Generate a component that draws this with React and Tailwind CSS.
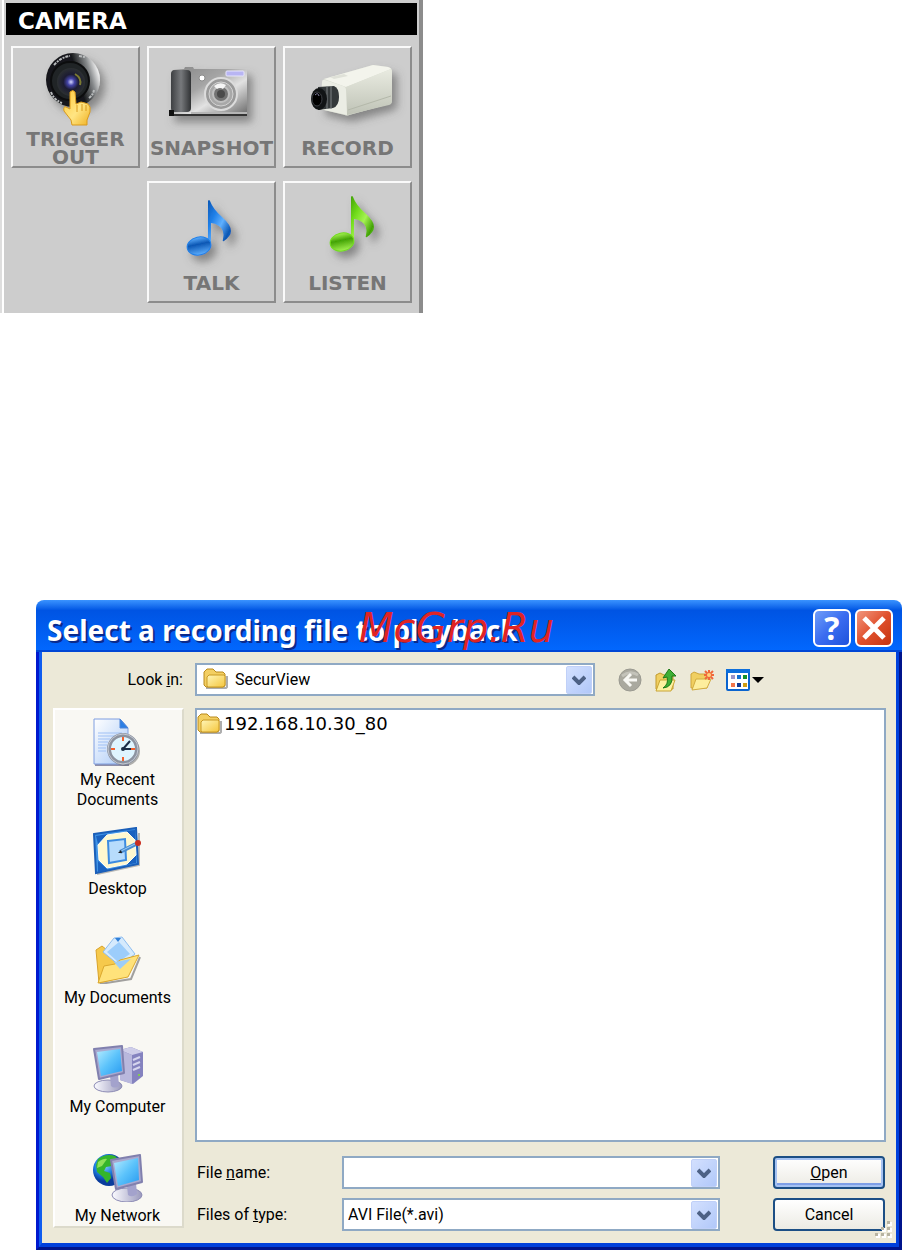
import { useState } from "react";

function TriggerIcon() {
  return (
    <svg viewBox="0 0 125 82" className="h-[82px] w-[125px]" aria-hidden="true">
      <defs>
        <linearGradient id="lensRing" x1="0" y1="0.3" x2="1" y2="0">
          <stop offset="0.5" stopColor="#17191b" />
          <stop offset="0.72" stopColor="#85888a" />
          <stop offset="0.88" stopColor="#f2f2f2" />
          <stop offset="1" stopColor="#8b8d8f" />
        </linearGradient>
        <radialGradient id="lensGlass">
          <stop offset="0" stopColor="#d4d6ff" />
          <stop offset="0.25" stopColor="#4444a8" />
          <stop offset="0.55" stopColor="#1c1c33" />
          <stop offset="1" stopColor="#2c3032" />
        </radialGradient>
        <linearGradient id="handFill" x1="0" y1="0" x2="1" y2="1">
          <stop offset="0" stopColor="#ffc93a" />
          <stop offset="0.55" stopColor="#ffe583" />
          <stop offset="1" stopColor="#f0b020" />
        </linearGradient>
        <filter id="softShadow" x="-30%" y="-30%" width="170%" height="170%">
          <feDropShadow dx="5" dy="6" stdDeviation="4" floodColor="#555" floodOpacity="0.6" />
        </filter>
      </defs>
      <g filter="url(#softShadow)">
        <circle cx="60" cy="32" r="27" fill="url(#lensRing)" />
      </g>
      <path d="M41 17q7-8 16-9M66 8l6 1M38 44q3 8 11 11M76 50q4-3 5-8" fill="none" stroke="#b9bcbd" strokeWidth="2" strokeDasharray="3 1 2 1" />
      <circle cx="57" cy="33" r="19" fill="#202426" stroke="#0c0d0e" strokeWidth="2" />
      <circle cx="58" cy="34" r="14" fill="url(#lensGlass)" />
      <path d="M62 26q7 4 5 11" fill="none" stroke="#7c7b32" strokeWidth="2" />
      <path
        d="M57 44q3-3 5 0l1 12 5-2 4 1 3 1q3 2 2 8l-3 8v5H59l-1-5-7-9q-1-5 2-4l4 2z"
        fill="url(#handFill)"
        stroke="#d99a1c"
        strokeWidth="1"
      />
      <path d="M64 57v7m5-8v7m4-6v6" stroke="#d99a1c" strokeWidth="1" />
    </svg>
  );
}

function SnapshotIcon() {
  return (
    <svg viewBox="0 0 125 82" className="h-[82px] w-[125px]" aria-hidden="true">
      <defs>
        <linearGradient id="camBody" x1="0" y1="0" x2="1" y2="1">
          <stop offset="0" stopColor="#858585" />
          <stop offset="0.4" stopColor="#a5a5a5" />
          <stop offset="0.62" stopColor="#e2e2e2" />
          <stop offset="1" stopColor="#666" />
        </linearGradient>
        <linearGradient id="camGrip">
          <stop offset="0" stopColor="#3d3f42" />
          <stop offset="0.5" stopColor="#77797c" />
          <stop offset="1" stopColor="#303234" />
        </linearGradient>
      </defs>
      <g filter="url(#softShadow)">
        <path d="M24 22l11-1 1-2h8l1 2h50q3 0 3 3v44H20v-5l2-2V26z" fill="url(#camBody)" />
      </g>
      <rect x="22" y="22" width="20" height="42" rx="4" fill="url(#camGrip)" />
      <path d="M42 64h56v2H42z" fill="#b5b5b5" />
      <path d="M20 66h78v2H20z" fill="#333" />
      <path d="M20 62h5v6h-5z" fill="#111" />
      <rect x="77" y="23" width="18" height="5" rx="1" fill="#b8b5f3" stroke="#e6e5fb" strokeWidth="1" />
      <circle cx="53" cy="30" r="3" fill="#fff" stroke="#8c8c8c" strokeWidth="1" />
      <circle cx="72" cy="46" r="16" fill="#9a9a9a" stroke="#dcdcdc" strokeWidth="2" />
      <circle cx="72" cy="46" r="12" fill="#a8a8a8" stroke="#d2d2d2" strokeWidth="1" />
      <circle cx="72" cy="46" r="8" fill="#737373" stroke="#bfbfbf" strokeWidth="2" />
      <circle cx="72" cy="46" r="4" fill="#4a4a4a" />
      <path d="M65 38q6-5 12-1l-3 4q-3-2-6 0z" fill="#f5f5f5" />
    </svg>
  );
}

function RecordIcon() {
  return (
    <svg viewBox="0 0 125 82" className="h-[82px] w-[125px]" aria-hidden="true">
      <defs>
        <linearGradient id="boxSide" x1="0" y1="0" x2="0" y2="1">
          <stop offset="0" stopColor="#e9ebe1" />
          <stop offset="1" stopColor="#bfc3b6" />
        </linearGradient>
      </defs>
      <g filter="url(#softShadow)">
        <path d="M39 31l49-14 15 2q4 1 4 4v29q0 3-3 4L64 67q-2 1-4 0l-25-6z" fill="#d8dbcf" />
      </g>
      <path d="M39 31l49-14 15 2q3 1 3 2L61 39z" fill="#f3f4ec" />
      <path d="M61 39l45-18q1 1 1 4v28q0 3-3 4L62 67z" fill="url(#boxSide)" />
      <path d="M63 62l43-14" stroke="#b4b8aa" strokeWidth="1" />
      <path d="M37 34q0-3 3-2l18 6q3 1 3 4l1 25-27-6z" fill="#ebede4" />
      <path d="M45 29l14-3 4 2-14 3z" fill="#dfe1d8" />
      <path d="M33 39l16-1q5 2 5 11t-6 11l-15 2z" fill="#34393a" />
      <path d="M42 38v23m4-23v23" stroke="#7c8283" strokeWidth="1" />
      <ellipse cx="34" cy="51" rx="8" ry="11" fill="#111415" />
      <ellipse cx="32" cy="51" rx="5" ry="7" fill="#000" stroke="#3c3f44" strokeWidth="1" />
      <path d="M30 47q3-3 4 1" fill="none" stroke="#8583a5" strokeWidth="1" />
    </svg>
  );
}

function NoteIcon({ id, light, main, dark, x = 0, y = 0 }) {
  return (
    <svg viewBox="0 0 125 82" className="h-[82px] w-[125px] overflow-visible" aria-hidden="true">
      <defs>
        <linearGradient id={`${id}Flag`} x1="0" y1="0" x2="1" y2="1">
          <stop offset="0" stopColor={dark} />
          <stop offset="0.3" stopColor={main} />
          <stop offset="0.55" stopColor={light} />
          <stop offset="0.8" stopColor={dark} />
          <stop offset="1" stopColor={main} />
        </linearGradient>
        <linearGradient id={`${id}Head`} x1="0" y1="0" x2="0" y2="1">
          <stop offset="0" stopColor={light} />
          <stop offset="0.4" stopColor={dark} />
          <stop offset="1" stopColor={light} />
        </linearGradient>
      </defs>
      <g filter="url(#softShadow)" transform={`translate(${x} ${y})`}>
        <path d="M59 18q1-2 2 0 3 8 12 16 9 8 9 14 0 5-7 10-2 1-1-2 2-9-4-13-4-3-8-3v23h-3z" fill={`url(#${id}Flag)`} />
        <ellipse cx="50" cy="63" rx="12" ry="9" transform="rotate(-12 50 63)" fill={`url(#${id}Head)`} stroke={main} />
      </g>
    </svg>
  );
}

const cameraButtons = [
  { label: "TRIGGER OUT", icon: <TriggerIcon /> },
  { label: "SNAPSHOT", icon: <SnapshotIcon /> },
  { label: "RECORD", icon: <RecordIcon /> },
  {
    label: "TALK",
    icon: <NoteIcon id="talk" light="#5fb0ff" main="#1e7fe8" dark="#0c57b4" />,
    className: "col-start-2",
  },
  {
    label: "LISTEN",
    icon: <NoteIcon id="listen" light="#a5f252" main="#72dc1c" dark="#43a305" x={7} y={-4} />,
  },
];

function CameraPanel() {
  return (
    <section className="w-[423px] max-w-full border-r-4 border-l-2 border-l-[#dedede] border-r-[#8c8c8c] bg-[#cdcdcd] pt-[3px] pr-[2px] pb-[10px] pl-1 shadow-[inset_2px_0_#fff]">
      <h2 className="h-8 bg-black pl-3 font-['DejaVu_Sans',sans-serif] text-[23px] leading-9 font-bold text-white">
        CAMERA
      </h2>
      <div className="mt-[11px] grid grid-cols-3 gap-x-[7px] gap-y-[13px] px-[5px]">
        {cameraButtons.map((b) => (
          <button
            key={b.label}
            type="button"
            className={`flex flex-col items-center border-2 border-t-[#fafafa] border-r-[#8c8c8c] border-b-[#8c8c8c] border-l-[#fafafa] ${b.className || ""}`}
          >
            {b.icon}
            <span className="flex h-9 items-center justify-center font-['DejaVu_Sans',sans-serif] text-[20px] leading-[18px] font-bold text-[#767676]">
              {b.label}
            </span>
          </button>
        ))}
      </div>
    </section>
  );
}

function FolderIcon() {
  return (
    <svg viewBox="0 0 25 22" className="h-[22px] w-[25px] shrink-0" aria-hidden="true">
      <defs>
        <linearGradient id="folderFront" x1="0" y1="0" x2="1" y2="1">
          <stop offset="0" stopColor="#fff6b8" />
          <stop offset="1" stopColor="#f5c63c" />
        </linearGradient>
      </defs>
      <path d="M3 20h20l1-1V8" fill="none" stroke="#777" strokeOpacity="0.6" strokeWidth="2" />
      <path d="M1 17V4l3-3h6l3 3h7l2 2v12l-2 1H3z" fill="#f3cf62" stroke="#b98a1c" />
      <path d="M4 18V9l2-2h15l1 1v9l-2 2H5z" fill="url(#folderFront)" stroke="#c99a25" />
    </svg>
  );
}

function BackIcon() {
  return (
    <svg viewBox="0 0 24 24" className="size-6" aria-hidden="true">
      <circle cx="12" cy="12" r="11" fill="#aaa99f" stroke="#9b9a91" />
      <path d="M4 8q8-6 16-1" stroke="#c4c3ba" strokeWidth="3" fill="none" />
      <path d="M13 6l-6 6 6 6M7 12h12" fill="none" stroke="#f8f8f4" strokeWidth="3" />
    </svg>
  );
}

function UpFolderIcon() {
  return (
    <svg viewBox="0 0 24 24" className="size-6" aria-hidden="true">
      <path d="M2 21V7l4-2 4 2h9v14z" fill="#f0cf61" stroke="#c19a2d" />
      <path d="M2 23l4-11h15l-4 11z" fill="#fdf0a0" stroke="#c9a434" />
      <path d="M9 20q6-4 4-11l-4 1 6-9 7 7-4 0q1 11-9 12z" fill="#3fae35" stroke="#1d7a17" />
    </svg>
  );
}

function NewFolderIcon() {
  return (
    <svg viewBox="0 0 24 24" className="size-6" aria-hidden="true">
      <path d="M1 20V6l3-2 5 2h8v14z" fill="#f0cf61" stroke="#cfa63a" />
      <path d="M2 22l4-11h15l-4 9z" fill="#fdee9d" stroke="#d2ac41" />
      <path d="M19 2v10M14 7h10M15 3l8 8M23 3l-8 8" stroke="#f0683a" strokeWidth="2" />
      <circle cx="19" cy="7" r="2" fill="#ffd27a" />
    </svg>
  );
}

function ViewsIcon() {
  return (
    <svg viewBox="0 0 38 24" className="h-6 w-[38px]" aria-hidden="true">
      <rect x="1" y="2" width="22" height="20" rx="1" fill="#fff" stroke="#0a64cf" strokeWidth="2" />
      <path d="M0 1h24v4H0z" fill="#0d6fdc" />
      <path d="M5 7h4v4H5z" fill="#9b94c8" />
      <path d="M11 7h4v4h-4z" fill="#1470d0" />
      <path d="M17 7h4v4h-4z" fill="#12912a" />
      <path d="M5 15h4v4H5z" fill="#f2764a" />
      <path d="M11 15h4v4h-4z" fill="#123a94" />
      <path d="M17 15h4v4h-4z" fill="#cf9c12" />
      <path d="M26 9h12l-6 6z" fill="#000" />
    </svg>
  );
}

function RecentIcon() {
  return (
    <svg viewBox="0 0 50 48" className="h-12 w-[50px]" aria-hidden="true">
      <defs>
        <linearGradient id="paper" x1="0" y1="0" x2="1" y2="1">
          <stop offset="0" stopColor="#fff" />
          <stop offset="1" stopColor="#a9c9f7" />
        </linearGradient>
      </defs>
      <path d="M2 47h34" stroke="#8f8fa8" strokeWidth="2" />
      <path d="M1 1h26l8 9v36H1z" fill="url(#paper)" stroke="#7f9ee0" />
      <path d="M27 1v9h8z" fill="#2c7fe4" stroke="#4f86d8" />
      <path d="M5 15h24M5 18h18M5 21h12M5 24h10M5 27h9M5 30h8M5 33h8" stroke="#9fc0f5" />
      <circle cx="32" cy="33" r="15" fill="#666" fillOpacity="0.5" />
      <circle cx="30" cy="31" r="14" fill="#dff5ff" stroke="#8c93a0" strokeWidth="4" />
      <circle cx="30" cy="31" r="15" fill="none" stroke="#c5c9d2" />
      <path d="M30 19v4M30 39v4M18 31h4M38 31h4" stroke="#f2622e" strokeWidth="2" />
      <path d="M30 31l7-8M30 31h8" stroke="#1c2d46" strokeWidth="2" />
      <circle cx="30" cy="31" r="2" fill="#1c2d46" />
    </svg>
  );
}

function DesktopIcon() {
  return (
    <svg viewBox="0 0 50 48" className="h-12 w-[50px]" aria-hidden="true">
      <path d="M4 47l42-9V6" fill="none" stroke="#777" strokeOpacity="0.5" strokeWidth="2" />
      <path d="M1 7l42-6 2 36L3 46z" fill="#3f93e6" stroke="#1b5fb8" strokeWidth="2" />
      <path d="M3 9l12-2-10 10zM32 4l10-1v10zM5 34l10 9-10 2zM43 28v8l-10 2z" fill="#1a62c0" />
      <path d="M14 8l20-3 8 8 1 15-9 9-20 4-8-8-1-15z" fill="#fff8cf" stroke="#fffdf0" />
      <path d="M15 14l17-2 1 21-17 3z" fill="#b7dcfc" stroke="#3c8be0" strokeWidth="2" />
      <path d="M27 25l16-8" stroke="#4a8cd0" strokeWidth="4" />
      <path d="M28 24l14-7" stroke="#9fd0f8" />
      <path d="M25 26l3-3 1 3z" fill="#222" />
      <circle cx="45" cy="16" r="3" fill="#c92e1f" />
    </svg>
  );
}

function DocumentsIcon() {
  return (
    <svg viewBox="0 0 50 48" className="h-12 w-[50px]" aria-hidden="true">
      <path d="M7 48l31-5 9-22" fill="none" stroke="#666" strokeOpacity="0.6" strokeWidth="2" />
      <path d="M3 14l6-4 5 4 26 4-5 22-29 7z" fill="#f6c94c" stroke="#d9a32a" />
      <path d="M21 2l8-1 13 17-15 12-17-14z" fill="#d5eafd" stroke="#8dbdf0" />
      <path d="M22 2h6l-3 4z" fill="#2f7fd8" />
      <path d="M14 16l12-10 11 12-12 8z" fill="#9ccdfb" />
      <path d="M5 47l6-17 11-2 5-4 19-5-11 22z" fill="#ffe27a" stroke="#dba82e" />
      <path d="M21 26l17-3-11 10z" fill="#9dcdf8" />
    </svg>
  );
}

function Monitor({ d, screen }) {
  return (
    <>
      <path d={d} fill="#a9a9cf" stroke="#8180ae" strokeWidth="2" strokeLinejoin="round" />
      <path d={screen} fill="url(#screenFill)" />
    </>
  );
}

function ComputerIcon() {
  return (
    <svg viewBox="0 0 50 48" className="h-12 w-[50px]" aria-hidden="true">
      <defs>
        <linearGradient id="screenFill" x1="0" y1="0" x2="1" y2="1">
          <stop offset="0" stopColor="#b5ecff" />
          <stop offset="0.5" stopColor="#5cc3fb" />
          <stop offset="1" stopColor="#279af0" />
        </linearGradient>
        <linearGradient id="baseFill">
          <stop offset="0" stopColor="#fbfbff" />
          <stop offset="1" stopColor="#9a99bd" />
        </linearGradient>
      </defs>
      <path d="M27 5l11-3 12 5v24l-10 8-13-4z" fill="#8583bf" />
      <path d="M27 5l11-3 12 5-11 3z" fill="#cfcee9" />
      <path d="M27 5l12 5v29l-12-4z" fill="#b9b8dd" />
      <path d="M40 15l7-3M40 20l7-3M40 25l7-3" stroke="#d6d5ee" strokeWidth="2" />
      <circle cx="46" cy="30" r="1" fill="#80e22c" />
      <ellipse cx="15" cy="41" rx="14" ry="6" fill="url(#baseFill)" stroke="#8d8cb5" />
      <path d="M17 31l8-2 1 12q-5 3-8 0z" fill="#a3a2cc" />
      <Monitor d="M1 4l28-3 2 27L6 34z" screen="M4 7l23-3 2 22-21 5z" />
    </svg>
  );
}

function NetworkIcon() {
  return (
    <svg viewBox="0 0 50 48" className="h-12 w-[50px]" aria-hidden="true">
      <defs>
        <radialGradient id="globeFill" cx="0.35" cy="0.35">
          <stop offset="0" stopColor="#8fd8ff" />
          <stop offset="0.6" stopColor="#1c7de0" />
          <stop offset="1" stopColor="#0a3c9c" />
        </radialGradient>
      </defs>
      <circle cx="16" cy="16" r="16" fill="url(#globeFill)" />
      <path d="M5 5q8-6 17-3l4 4-5 2-2 4-6 1-2 4 6 2 1 5-4 5-4-6-6-5-1-7z" fill="#35b52b" />
      <path d="M5 8q6-4 9-3l-5 7-5 2z" fill="#8fe05a" />
      <ellipse cx="34" cy="41" rx="15" ry="7" fill="url(#baseFill)" stroke="#8d8cb5" />
      <path d="M34 32l9-3 1 11q-5 4-9 1z" fill="#a3a2cc" />
      <Monitor d="M18 6l29-5 2 27-26 7z" screen="M21 9l24-5 1 22-21 6z" />
    </svg>
  );
}

function Chevron() {
  return (
    <span className="flex h-7 w-[26px] items-center justify-center rounded-xs border border-[#c0d0f8] bg-linear-to-br from-[#d3e0fe] to-[#b1c8f9]">
      <svg viewBox="0 0 14 10" className="h-[10px] w-[14px]" aria-hidden="true">
        <path d="M1 2l6 6 6-6" fill="none" stroke="#4d6185" strokeWidth="4" />
      </svg>
    </span>
  );
}

const places = [
  { label: "My Recent Documents", icon: <RecentIcon /> },
  { label: "Desktop", icon: <DesktopIcon /> },
  { label: "My Documents", icon: <DocumentsIcon /> },
  { label: "My Computer", icon: <ComputerIcon /> },
  { label: "My Network", icon: <NetworkIcon /> },
];

const tools = [
  { label: "Back", icon: <BackIcon /> },
  { label: "Up One Level", icon: <UpFolderIcon /> },
  { label: "Create New Folder", icon: <NewFolderIcon /> },
  { label: "Views", icon: <ViewsIcon /> },
];

const field = "h-[33px] w-full appearance-none border-2 border-[#8fa9c4] bg-white outline-none";

function FileDialog() {
  const [fileName, setFileName] = useState("");

  return (
    <section
      role="dialog"
      aria-labelledby="dialog-title"
      className="overflow-hidden rounded-t-lg font-[Roboto,sans-serif] text-base text-black"
    >
      <header className="relative flex h-[52px] items-center justify-between bg-linear-to-b from-[#3a93ff] via-[#0054e3] via-20% to-[#0268ff] pr-[9px] pl-[11px] shadow-[inset_0_-2px_#0046d5]">
        <h2
          id="dialog-title"
          className="pt-2 font-['Noto_Sans',sans-serif] text-[28px] leading-9 font-bold whitespace-nowrap text-white [text-shadow:2px_2px_#0a2a8c]"
        >
          Select a recording file to playback
        </h2>
        <span className="pointer-events-none absolute top-1 left-[323px] font-['DejaVu_Sans',sans-serif] text-[40px] leading-[48px] text-[#e02424] italic select-none">
          McGrp.Ru
        </span>
        <div className="flex gap-1 pt-1">
          <button
            type="button"
            aria-label="Help"
            className="flex size-[38px] items-center justify-center rounded-md border-2 border-white bg-linear-to-br from-[#6f9cf8] via-[#3a6cf0] to-[#1f52dc] font-['Open_Sans',sans-serif] text-[32px] leading-none font-bold text-white"
          >
            ?
          </button>
          <button
            type="button"
            aria-label="Close"
            className="flex size-[38px] items-center justify-center rounded-md border-2 border-white bg-linear-to-br from-[#f0957c] via-[#e0502c] to-[#c5330f]"
          >
            <svg viewBox="0 0 24 24" className="size-6" aria-hidden="true">
              <path d="M2 2l20 20M22 2L2 22" stroke="#fff" strokeWidth="5" />
            </svg>
          </button>
        </div>
      </header>

      <div className="border-x-3 border-b-3 border-r-[#00148c] border-b-[#00148c] border-l-[#0019cf]">
        <div className="border-x-3 border-b-4 border-r-[#0040dc] border-b-[#0040dc] border-l-[#0f5cf0]">
          <div className="relative grid grid-cols-[131px_1fr] gap-x-[11px] gap-y-3 bg-[#ece9d8] pt-[11px] pr-[10px] pb-3 pl-[11px]">
            <label htmlFor="look-in" className="self-center pr-px text-right">
              Look <u>i</u>n:
            </label>
            <div className="flex items-center gap-[23px]">
              <div className="relative w-[400px]">
                <select id="look-in" className={`${field} pl-[38px]`}>
                  <option>SecurView</option>
                </select>
                <span className="pointer-events-none absolute top-[5px] left-2">
                  <FolderIcon />
                </span>
                <span className="pointer-events-none absolute top-[3px] right-[3px]">
                  <Chevron />
                </span>
              </div>
              <div className="flex items-center gap-3">
                {tools.map((t) => (
                  <button key={t.label} type="button" aria-label={t.label}>
                    {t.icon}
                  </button>
                ))}
              </div>
            </div>

            <nav className="self-start border-2 border-t-white border-r-[#dcdacb] border-b-[#dcdacb] border-l-white bg-[#f9f8f3] pt-2">
              {places.map((p) => (
                <button key={p.label} type="button" className="flex h-[109px] w-full flex-col items-center gap-1 pr-[2px] last:h-[72px]">
                  {p.icon}
                  <span className="max-w-[120px] leading-5">{p.label}</span>
                </button>
              ))}
            </nav>

            <div>
              <ul className="min-h-[434px] border-2 border-[#8fa9c4] bg-white py-[2px]">
                <li className="flex items-center gap-[2px] font-['DejaVu_Sans',sans-serif] text-[18px] leading-6">
                  <FolderIcon />
                  192.168.10.30_80
                </li>
              </ul>
              <form
                className="mt-[14px] grid grid-cols-[147px_1fr_112px] items-center gap-y-[9px] pr-px"
                onSubmit={(e) => e.preventDefault()}
              >
                <label htmlFor="file-name" className="pl-[2px]">
                  File <u>n</u>ame:
                </label>
                <div className="relative mr-[53px]">
                  <input
                    id="file-name"
                    type="text"
                    value={fileName}
                    onChange={(e) => setFileName(e.target.value)}
                    className={`${field} pr-8 pl-1`}
                  />
                  <button type="button" aria-label="Recent names" className="absolute top-[3px] right-[3px]">
                    <Chevron />
                  </button>
                </div>
                <button
                  type="submit"
                  className="h-[33px] rounded-sm border-2 border-[#1c4f85] bg-linear-to-b from-white to-[#ecebe4] shadow-[inset_0_0_0_2px_#a5c2f2,inset_0_-4px_#7f9fe6]"
                >
                  <u>O</u>pen
                </button>
                <label htmlFor="file-type" className="pl-[2px]">
                  Files of <u>t</u>ype:
                </label>
                <div className="relative mr-[53px]">
                  <select id="file-type" className={`${field} pl-1`}>
                    <option>AVI File(*.avi)</option>
                  </select>
                  <span className="pointer-events-none absolute top-[3px] right-[3px]">
                    <Chevron />
                  </span>
                </div>
                <button
                  type="button"
                  className="h-[33px] rounded-sm border-2 border-[#1c4f85] bg-linear-to-b from-white to-[#ecebe4]"
                >
                  Cancel
                </button>
              </form>
            </div>

            <svg viewBox="0 0 18 18" className="absolute right-1 bottom-1 size-[18px]" aria-hidden="true">
              <path d="M14 1h4v4h-4zM14 7h4v4h-4zM14 13h4v4h-4zM8 7h4v4H8zM8 13h4v4H8zM2 13h4v4H2z" fill="#fff" />
              <path d="M13 0h3v3h-3zM13 6h3v3h-3zM13 12h3v3h-3zM7 6h3v3H7zM7 12h3v3H7zM1 12h3v3H1z" fill="#b8b4a2" />
            </svg>
          </div>
        </div>
      </div>
    </section>
  );
}

export default function App() {
  return (
    <main className="min-h-screen bg-white">
      <CameraPanel />
      <div className="mt-[287px] pl-9">
        <FileDialog />
      </div>
    </main>
  );
}
